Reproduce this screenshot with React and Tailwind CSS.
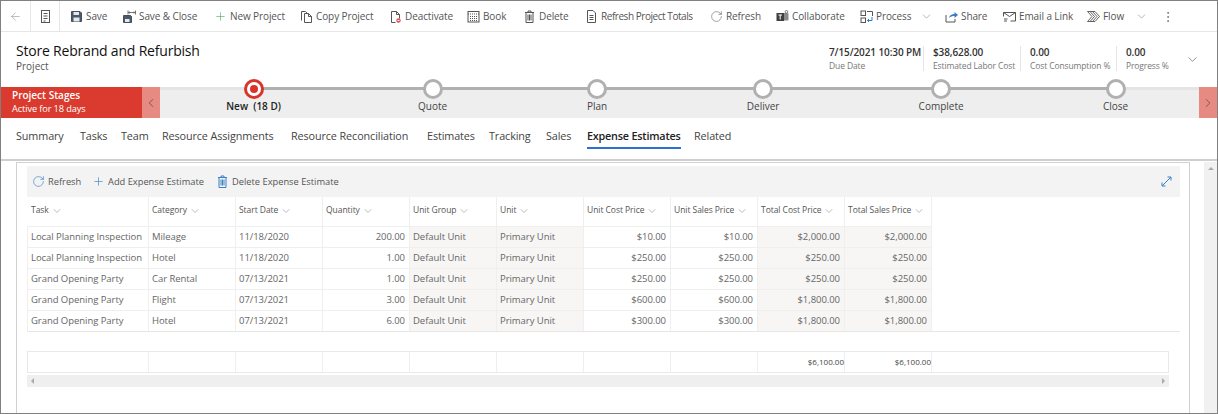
import React from "react";
import { ArrowLeft, Plus, RotateCw, ChevronDown, ChevronLeft, ChevronRight, EllipsisVertical } from "lucide-react";

const Ico = ({ children }) => (
  <svg width="13" height="13" viewBox="0 0 13 13" fill="none" stroke="#555" strokeWidth="1" className="shrink-0">{children}</svg>
);
const SaveI = () => <Ico><path d="M1.500 1.500h8.500l1.500 1.500v8.500h-10z" fill="#4a5a6a" stroke="#44505c"/><rect x="3.500" y="2" width="5.500" height="3" fill="#e8e8e8" stroke="none"/><rect x="3.500" y="7.500" width="6" height="4" fill="#e8e8e8" stroke="none"/></Ico>;
const SaveCloseI = () => <Ico><path d="M0.500 5.500h7l1 1v6h-8z" fill="#4a5a6a" stroke="#44505c"/><rect x="2" y="9" width="4.500" height="3" fill="#e8e8e8" stroke="none"/><path d="M5 2.500h7M5 .5v4M12.500 .5v4M6.500 1.500l-1 1 1 1M11 1.500l1 1-1 1" strokeWidth=".8"/></Ico>;
const NoteI = () => <svg width="13" height="15" viewBox="0 0 13 15" fill="none" stroke="#555"><rect x="2.500" y="1.500" width="8" height="12"/><path d="M4.500 4.500h4M4.500 7h4M4.500 9.500h4M4.500 12h2"/></svg>;
const CopyI = () => <Ico><path d="M1.500 10.500v-9h4l2 2M4.500 12.500v-9h4l3 3v6zM8.500 3.500v3h3"/></Ico>;
const DeactI = () => <Ico><path d="M2.500 12.500v-11h5l3 3v4M7.500 1.500v3h3M2.500 12.500h4"/><circle cx="9.500" cy="10.500" r="2.200" fill="#d9534f" stroke="none"/><path d="M8.500 10.500h2" stroke="#fff"/></Ico>;
const BookI = () => <Ico><rect x="1" y="1.500" width="11" height="10.500"/><path d="M1 4h11M3 6.500h7M3 8.500h7M3 10.500h7" strokeDasharray="1 1"/></Ico>;
const TrashI = ({ c = "#555" }) => <svg width="13" height="13" viewBox="0 0 13 13" fill="none" stroke={c} className="shrink-0"><path d="M2 2.500h9M5 2.500v-1.500h3v1.500M3 2.500v10h7v-10M5 4.500v6M6.500 4.500v6M8 4.500v6"/></svg>;
const TotalsI = () => <Ico><path d="M2.500 12.500v-12h5.500l2.500 2.500v9.500zM4.500 5.500h4M4.500 7.500h4M4.500 9.500h4" /></Ico>;
const TeamsI = () => <Ico><rect x="6" y="3" width="6.500" height="7.500" rx="1" fill="#8a8a8a" stroke="none"/><circle cx="10.500" cy="1.800" r="1.300" stroke="#777"/><rect x="0.500" y="3" width="7.500" height="8" fill="#3f3f3f" stroke="none"/><path d="M2.500 5h3.500M4.200 5v4.500" stroke="#fff"/></Ico>;
const ProcessI = () => <Ico><rect x="1" y="1" width="4.500" height="4.500"/><rect x="1" y="8" width="4.500" height="4.500"/><path d="M7 1.500h5.500v4.500"/><path d="M12 7v3.500H7.500M9 9l-1.500 1.500L9 12" stroke="#2b7cd3"/></Ico>;
const ShareI = () => <Ico><path d="M1 5v7h9V9"/><path d="M4 8c.5-3 3-4 5.500-4V2l3.500 3-3.500 3V6C7.500 6 5.500 6.500 4 8z" fill="#3b7cc4" stroke="none"/></Ico>;
const EmailI = () => <Ico><path d="M.5 2.500h12v8.500h-5M.5 2.500l6 4 6-4M.5 2.500v4"/><path d="M1 9h3.500M1 11h3"/></Ico>;
const FlowI = () => <Ico><path d="M.5 1.500h7.500l4.500 5-4.500 5H.5l4.500-5zM3 1.500l4.500 5-4.500 5M5.500 1.500l4.500 5-4.500 5" strokeWidth=".9"/></Ico>;
const lu = (C, color = "#555") => <C size={13} strokeWidth={1} color={color} className="shrink-0" />;

const commands = [
  { i: <SaveI />, t: "Save", w: "w-[53px]" },
  { i: <SaveCloseI />, t: "Save & Close", w: "w-[91px]" },
  { i: lu(Plus, "#3c9a50"), t: "New Project", w: "w-[86px]" },
  { i: <CopyI />, t: "Copy Project", w: "w-[89px]" },
  { i: <DeactI />, t: "Deactivate", w: "w-[78px]" },
  { i: <BookI />, t: "Book", w: "w-[56px]" },
  { i: <TrashI />, t: "Delete", w: "w-[62px]" },
  { i: <TotalsI />, t: "Refresh Project Totals", w: "w-[125px] tracking-[-0.45px]" },
  { i: lu(RotateCw), t: "Refresh", w: "w-[66px]" },
  { i: <TeamsI />, t: "Collaborate", w: "w-[84px]" },
  { i: <ProcessI />, t: "Process", w: "w-[60px]", c: "w-[25px]" },
  { i: <ShareI />, t: "Share", w: "w-[58px]" },
  { i: <EmailI />, t: "Email a Link", w: "w-[84px]" },
  { i: <FlowI />, t: "Flow", w: "w-[48px]", c: "w-[23px]" },
];

const stages = [
  { t: "New  (18 D)", w: "w-[187px]", active: true },
  { t: "Quote", w: "w-[171px]" },
  { t: "Plan", w: "w-[158px]" },
  { t: "Deliver", w: "w-[174px]" },
  { t: "Complete", w: "w-[182px]" },
  { t: "Close", w: "w-[167px]" },
];

const tabs = [
  ["Summary", "w-[64px]"], ["Tasks", "w-[41px]"], ["Team", "w-[41px]"], ["Resource Assignments", "w-[129px]"],
  ["Resource Reconciliation", "w-[136px]"], ["Estimates", "w-[62px]"], ["Tracking", "w-[57px]"], ["Sales", "w-[41px]"],
  ["Expense Estimates", "w-[107px]", true], ["Related", "w-[50px]"],
];

const stats = [
  ["7/15/2021 10:30 PM", "Due Date", "w-[94px]", false],
  ["$38,628.00", "Estimated Labor Cost", "w-[97px]", true],
  ["0.00", "Cost Consumption %", "w-[96px]", true],
  ["0.00", "Progress %", "w-[66px]", true],
];

const headers = ["Task", "Category", "Start Date", "Quantity", "Unit Group", "Unit", "Unit Cost Price", "Unit Sales Price", "Total Cost Price", "Total Sales Price"];
const rows = [
  ["Local Planning Inspection", "Mileage", "11/18/2020", "200.00", "Default Unit", "Primary Unit", "$10.00", "$10.00", "$2,000.00", "$2,000.00"],
  ["Local Planning Inspection", "Hotel", "11/18/2020", "1.00", "Default Unit", "Primary Unit", "$250.00", "$250.00", "$250.00", "$250.00"],
  ["Grand Opening Party", "Car Rental", "07/13/2021", "1.00", "Default Unit", "Primary Unit", "$250.00", "$250.00", "$250.00", "$250.00"],
  ["Grand Opening Party", "Flight", "07/13/2021", "3.00", "Default Unit", "Primary Unit", "$600.00", "$600.00", "$1,800.00", "$1,800.00"],
  ["Grand Opening Party", "Hotel", "07/13/2021", "6.00", "Default Unit", "Primary Unit", "$300.00", "$300.00", "$1,800.00", "$1,800.00"],
];
const cols = "grid grid-cols-[122px_87px_87px_87px_87px_87px_87px_87px_87px_87px]";
const footCols = "grid grid-cols-[121px_87px_87px_87px_87px_87px_87px_87px_87px_87px]";
const shaded = [4, 5, 8, 9];
const right = [3, 6, 7, 8, 9];

export default function App() {
  return (
    <div className="w-[1218px] h-[414px] overflow-hidden border border-[#808080] bg-white flex flex-col font-['Open_Sans','Noto_Sans',sans-serif]">
      {/* command bar */}
      <div className="h-[31px] shrink-0 flex items-center border-b border-[#e6e6e6] text-[10px] tracking-[-0.1px] text-[#555]">
        <div className="w-[30px] h-full flex items-center justify-center border-r border-[#e6e6e6]"><ArrowLeft size={13} strokeWidth={1} color="#888" /></div>
        <div className="w-[29px] h-full flex items-center justify-center border-r border-[#e6e6e6]"><NoteI /></div>
        <div className="flex items-center pl-[10px] pt-[1px]">
          {commands.map((c) => (
            <div key={c.t} className="flex items-center">
              <div className={`flex items-center gap-[3px] whitespace-nowrap ${c.w}`}>{c.i}<span>{c.t}</span></div>
              {c.c && <div className={`${c.c} flex`}><ChevronDown size={13} strokeWidth={1} color="#777" /></div>}
            </div>
          ))}
          <EllipsisVertical size={14} strokeWidth={1.2} color="#666" className="ml-[3px]" />
        </div>
      </div>

      {/* title */}
      <div className="h-[55px] shrink-0 flex justify-between pl-[15px]">
        <div className="pt-[10px]">
          <div className="text-[14px] leading-[18px] font-medium text-[#111] tracking-[-0.2px]">Store Rebrand and Refurbish</div>
          <div className="text-[10px] leading-[13px] text-[#555]">Project</div>
        </div>
        <div className="flex items-start pt-[14px] pr-[17px]">
          {stats.map(([a, b, w, line]) => (
            <div key={b} className={`${w} h-[25px] whitespace-nowrap ${line ? "border-l border-[#e6e6e6] pl-[9px]" : ""}`}>
              <div className="text-[10px] leading-[13px] font-semibold text-[#333] tracking-[-0.1px]">{a}</div>
              <div className="text-[8.5px] leading-[13px] text-[#777] tracking-[-0.12px]">{b}</div>
            </div>
          ))}
          <ChevronDown size={15} strokeWidth={1} color="#555" className="mt-[6px] ml-[3px]" />
        </div>
      </div>

      {/* business process flow */}
      <div className="h-[31px] shrink-0 flex bg-[#eeeeee]">
        <div className="w-[142px] bg-[#da3b2e] text-white pl-[11px] pt-[2px] whitespace-nowrap">
          <div className="text-[10px] leading-[13px] font-semibold">Project Stages</div>
          <div className="text-[9.2px] leading-[14px] tracking-[-0.1px]">Active for 18 days</div>
        </div>
        <div className="w-[18px] bg-[#e78a81] flex items-center justify-center"><ChevronLeft size={14} strokeWidth={1} color="#333" /></div>
        <div className="relative w-[1039px] flex">
          <div className="absolute left-0 right-0 top-0 h-[3px] bg-[#e4e4e4]" />
          <div className="absolute left-[93px] w-[863px] top-0 h-[3px] bg-[#b0b0b0]" />
          {stages.map((s) => (
            <div key={s.t} className={`${s.w} shrink-0 relative flex flex-col items-center`}>
              {s.active ? (
                <div className="mt-[-8px] w-[20px] h-[20px] rounded-full border-[3px] border-[#d8352a] bg-white flex items-center justify-center"><div className="w-[8px] h-[8px] rounded-full bg-[#d8352a]" /></div>
              ) : (
                <div className="mt-[-8px] w-[20px] h-[20px] rounded-full border-[3px] border-[#b0b0b0] bg-white" />
              )}
              <div className={`whitespace-pre text-[10px] leading-[13px] mt-[1px] ${s.active ? "font-semibold text-[#222]" : "text-[#444]"}`}>{s.t}</div>
            </div>
          ))}
        </div>
        <div className="w-[18px] bg-[#e78a81] flex items-center justify-center"><ChevronRight size={14} strokeWidth={1} color="#333" /></div>
      </div>

      {/* tabs */}
      <div className="h-[43px] shrink-0 flex items-start pl-[15px] pt-[10px] border-b-[2px] border-[#cfcfcf]">
        {tabs.map(([t, w, on]) => (
          <div key={t} className={`${w} shrink-0 flex`}>
            <div className={`h-[21px] whitespace-nowrap text-[10.8px] leading-[16px] ${on ? "font-semibold text-[#222] tracking-[-0.2px] border-b-[2px] border-[#2f6fd4]" : "text-[#444] tracking-[-0.1px]"}`}>{t}</div>
          </div>
        ))}
      </div>

      {/* content */}
      <div className="flex-1 flex min-h-0">
        <div className="ml-[15px] mt-[1px] w-[1175px] border-l border-t border-r border-[#d2d2d2] pl-[10px] pr-[9px] pt-[3px]">
          <div className="h-[31px] bg-[#f3f3f3] flex items-center pl-[5px] pr-[5px] text-[9.3px] text-[#555] whitespace-nowrap">
            <RotateCw size={13} strokeWidth={1.2} color="#3b82c4" />
            <span className="ml-[3px] w-[38px]">Refresh</span>
            <Plus size={13} strokeWidth={1.2} color="#3b82c4" className="ml-[6px]" />
            <span className="ml-[3px] w-[108px]">Add Expense Estimate</span>
            <TrashI c="#3b82c4" />
            <span className="ml-[3px]">Delete Expense Estimate</span>
            <svg width="13" height="13" viewBox="0 0 13 13" fill="none" stroke="#3b82c4" className="ml-auto mr-[2px]"><path d="M2 11L11 2M7.500 2H11V5.500M2 7.500V11H5.500"/></svg>
          </div>

          <div className={`${cols} h-[30px] text-[8.5px] text-[#555] tracking-[-0.05px]`}>
            {headers.map((h, j) => (
              <div key={h} className={`border-r border-[#efefef] border-b pb-[2px] flex items-center gap-[2px] whitespace-nowrap ${j === 0 ? "pl-[4px]" : "pl-[3px]"}`}>
                {h}<ChevronDown size={12} strokeWidth={1} color="#777" />
              </div>
            ))}
          </div>

          <div className="border-b border-[#e6e6e6]">
            {rows.map((r, i) => (
              <div key={i} className={`${cols} ${i < 4 ? "h-[21px]" : "h-[20px]"} text-[9.5px] text-[#666] tracking-[-0.05px]`}>
                {r.map((c, j) => (
                  <div key={j} className={`border-r border-[#efefef] pl-[3px] pr-[4px] flex items-center whitespace-nowrap ${i < 4 ? "border-b pt-[1px]" : ""} ${j === 0 ? "border-l" : ""} ${shaded.includes(j) ? "bg-[#f7f6f5]" : ""} ${right.includes(j) ? "justify-end" : ""}`}>{c}</div>
                ))}
              </div>
            ))}
          </div>

          <div className="mt-[19px] w-[1142px] h-[22px] border border-[#e9e9e9] text-[8px] text-[#444]">
            <div className={`${footCols} h-full`}>
              {headers.map((h, j) => (
                <div key={h} className="border-r border-[#efefef] flex items-center justify-end">{j > 7 ? "$6,100.00" : ""}</div>
              ))}
            </div>
          </div>
          <div className="mt-[2px] w-[1142px] h-[12px] bg-[#efefef] flex items-center justify-between px-[4px]">
            <div className="w-0 h-0 border-y-[3px] border-y-transparent border-r-[3px] border-r-[#aaa]" />
            <div className="w-0 h-0 border-y-[3px] border-y-transparent border-l-[3px] border-l-[#aaa]" />
          </div>
        </div>
        <div className="ml-[14px] w-[13px] mt-[1px] bg-[#f1f1f1] flex justify-center pt-[5px]">
          <div className="w-0 h-0 border-x-[3px] border-x-transparent border-b-[3px] border-b-[#aaa]" />
        </div>
      </div>
    </div>
  );
}
